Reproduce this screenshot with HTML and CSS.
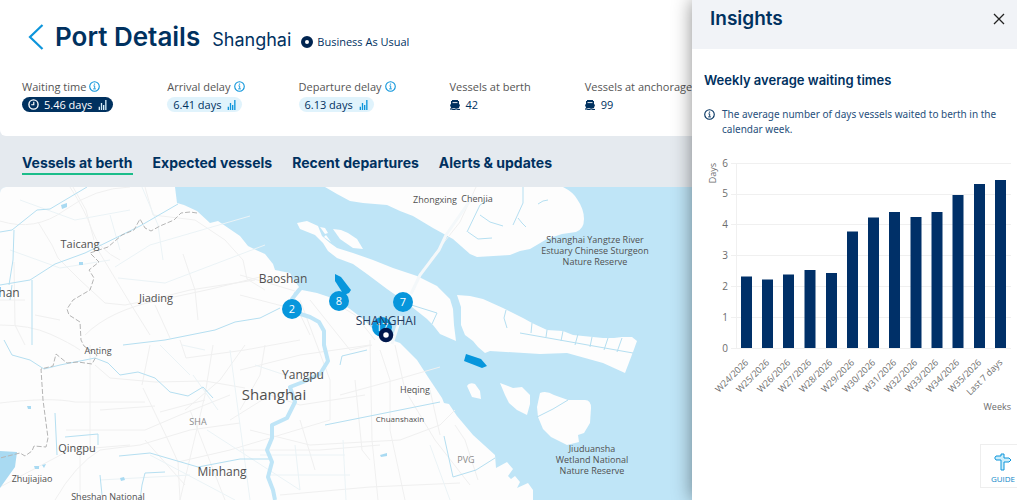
FILE: index.html
```html
<!DOCTYPE html>
<html lang="en">
<head>
<meta charset="utf-8">
<title>Port Details</title>
<link rel="stylesheet" href="styles.css">
</head>
<body>
<svg width="0" height="0" class="defs" aria-hidden="true">
  <symbol id="info" viewBox="0 0 12 12"><circle cx="6" cy="6" r="5.200" fill="none" stroke="currentColor" stroke-width="1.200"/><path d="M4.800 5.300h1.400v3M4.500 8.600h3" fill="none" stroke="currentColor"/><circle cx="6" cy="3.400" r=".8" fill="currentColor"/></symbol>
  <symbol id="bars" viewBox="0 0 10 12"><path d="M1.200 12V8M3.800 12V3.500M6.400 12V6M9 12V0" stroke="currentColor" stroke-width="1.600"/></symbol>
  <symbol id="ship" viewBox="0 0 10 10"><path d="M2 0h6v1h1v3l1 1-1.200 3.200H1.200L0 5l1-1V1h1z" fill="currentColor"/><path d="M2.500 2.600h5" stroke="#fff" stroke-width=".9"/><path d="M0 9.300q1.200-.9 2.500 0 1.200.7 2.500 0 1.200-.7 2.500 0 1.200.7 2.500 0" fill="none" stroke="currentColor" stroke-width="1.200"/></symbol>
</svg>
<div class="app">
  <main class="main">
    <header class="hero">
      <div class="title-row">
        <button class="back" aria-label="Back"><svg viewBox="0 0 16 26"><path d="M14.500 1 2 13l12.500 12" fill="none" stroke="#0d95db" stroke-width="2.200"/></svg></button>
        <h1>Port Details</h1>
        <span class="port">Shanghai</span>
        <span class="status"><i class="ring"></i>Business As Usual</span>
      </div>
      <div class="metrics">
        <div class="metric"><span class="label">Waiting time <svg class="info"><use href="#info"/></svg></span>
          <button class="pill active"><svg class="clock" viewBox="0 0 12 12"><circle cx="6" cy="6" r="5" fill="none" stroke="currentColor" stroke-width="1.500"/><path d="M6.300 3v3.300H3.500" fill="none" stroke="currentColor" stroke-width="1.300"/></svg>5.46 days<svg class="bars"><use href="#bars"/></svg></button></div>
        <div class="metric"><span class="label">Arrival delay <svg class="info"><use href="#info"/></svg></span>
          <button class="pill">6.41 days<svg class="bars"><use href="#bars"/></svg></button></div>
        <div class="metric"><span class="label">Departure delay <svg class="info"><use href="#info"/></svg></span>
          <button class="pill">6.13 days<svg class="bars"><use href="#bars"/></svg></button></div>
        <div class="metric"><span class="label">Vessels at berth</span><span class="count"><svg class="ship"><use href="#ship"/></svg>42</span></div>
        <div class="metric"><span class="label">Vessels at anchorage</span><span class="count"><svg class="ship"><use href="#ship"/></svg>99</span></div>
      </div>
    </header>
    <nav class="tabs">
      <a class="tab current" href="#berth">Vessels at berth</a>
      <a class="tab" href="#expected">Expected vessels</a>
      <a class="tab" href="#departures">Recent departures</a>
      <a class="tab" href="#alerts">Alerts &amp; updates</a>
    </nav>
    <section class="map" aria-label="Map of Shanghai">
      <svg class="map-canvas" viewBox="0 187 692 313" preserveAspectRatio="xMinYMin slice">
        <g class="land">
          <path d="M0 187H175L177 203 184 205 197 211 210 223 218 221 240 236 248 246 256 250 265 254 273 264 275 270 290 273 294 280 299 287 293 294 302 290 317 293 335 299 350 309 363 319 380 336 400 343 417 360 428 377 442 398 444 403 449 404 457 416 473 435 495 455 496 468 507 462 513 469 508 476 511 479 515 476 520 482 517 488 528 483 533 490 533 500H0z"/>
          <path d="M325 187 337 194 350 201 363 203 387 205 400 211 413 216 433 228 453 239 470 254 477 257 510 255 520 251 530 249 547 239 562 234 576 232Q584 229 584 219T577 199Q573 192 563 187z"/>
          <path d="M297 223 307 221 318 226 322 236 330 243 337 248 353 253 373 260 393 268 417 276 437 286 450 299 453 309 454 325 456 341 440 334 433 325 427 319 407 303 387 289 367 274 353 264 337 258 328 251 323 243 315 235 300 229z"/>
          <path d="M320 227 325 228 328 233 325 234zM326 235 331 242 324 237z"/>
          <path d="M333 229 341 230 348 233 357 239 363 249 353 248 340 239z"/>
          <path d="M457 295 470 296 483 299 503 308 523 318 532 323 547 330 563 331 573 335 603 338 614 338 622 337 632 337 637 341 633 352 625 373 603 363 567 353 540 354 490 351 485 353 478 347 473 341 465 335 461 325 461 307z"/>
          <path d="M467 386Q469 382 475 384L480 391 481 399 472 397zM500 383 513 388 522 387 530 395 530 404 527 415 517 410 509 403 505 395z"/>
          <path d="M540 393Q546 390 554 395L568 400 585 400Q591 400 591 408L590 423 584 433 578 435 579 442 567 445 551 437 543 429 538 417 537 407z"/>
        </g>
        <g class="roads">
          <path d="M70 187Q85 210 92 230T120 260M0 221Q35 232 65 210T130 187M38 222 52 245 58 258 80 280 105 303 125 305 150 300 190 290 255 280M98 250 130 303 150 335M73 187 86 210 94 240M145 187 153 215M153 215 195 220 225 240 243 260 247 279 265 290M183 254 195 290 198 320M155 305 170 338M0 325Q30 325 50 334T80 350M14 262 15 325 25 345M85 335Q110 310 160 300T260 277"/>
          <path d="M0 403Q50 397 75 402L145 402M90 345 90 450M95 365 110 378 155 382 205 381 245 388M143 388 168 440 178 462 180 500M66 430H145L180 415 230 395M55 500Q75 465 100 450L140 445 190 430 240 423M80 500 80 450M150 345 142 385M213 345 205 395 180 500M180 340 186 358 245 350 300 340M160 412 205 400M190 410 225 500M145 440 185 485M245 345 220 380 185 410M0 487 70 450 130 445M178 462 230 450 330 420"/>
          <path d="M265 345 260 375 240 410M300 300 315 340 330 380 330 420M310 300 350 350 372 345M370 340 372 440 378 500M380 350 390 380 390 430 405 500M340 395 395 380 440 367M250 430 310 445 400 440 440 425 455 410M240 450 320 450 380 445M280 495 370 487 460 483M300 420 315 470M240 370 300 355 370 345M395 345 405 390 435 440 470 485M355 380 362 450 370 460M330 300 355 315 375 340M430 390 440 435M455 425 465 440 478 480"/>
          <path d="M240 275 275 285 298 292M240 295 298 310 310 335M0 300H25M35 315 60 320M100 410 155 406M230 420 270 395 300 405 365 395M430 260 460 222 476 187"/>
        </g>
        <path class="minor" d="M115 267 150 245 250 216M118 278 165 283 265 245M142 187 158 225 163 260M182 345 205 350M230 350 250 500M160 345 190 375M193 375 218 410M207 430 300 490M150 455 235 500M100 480 190 475M255 365 300 380M260 455 345 455M270 475 350 475M343 440 346 500M430 445 450 500M295 445 300 490M10 250 60 268 110 260M20 200 75 220 130 210M110 215 120 250"/>
        <path class="bridge" d="M474 195 446 235 439 250 420 275 411 294M401 316 392 344"/>
        <g class="creek">
          <path d="M0 232 12 230 37 210 50 209 87 187M14 230 13 260 9 285M0 285 30 280 55 264 85 253 140 226 178 204M12 285 10 300M32 280 32 345M123 345 165 340 215 330 235 322 260 318 280 308"/>
          <path d="M4 340 12 355 30 360 44 369 60 365 95 358 108 363 120 375 138 372 155 378 170 392 188 396 203 387 213 398M119 456 150 453 198 467 240 459 272 459M65 437 98 434 98 445M55 413 57 455M140 500 142 485 145 473 165 472M340 365 342 356 367 350"/>
          <path d="M325 425 440 402M444 436 453 477 476 470 495 458M467 232 480 205 488 200M523 187 523 203 513 225M480 215 490 222 503 226M468 232 478 239 492 238M538 204 543 201 548 200M518 218 522 223 526 227M633 353 520 333M532 323 531 333M547 330 546 337M563 331 561 341M578 334 575 345M592 337 590 347M608 338 604 350M622 338 617 352M506 310 504 318 507 328M537 417 553 409 568 400M405 303 437 313 432 324M100 475 102 495"/>
        </g>
        <path class="river" d="M300 289 292 299 294 312 310 317 319 322 324 331 324 345 328 361 320 374 303 382 290 387 295 402 287 418 272 425 272 438 267 450 272 462 268 477 273 490 275 500"/>
        <path class="lake" d="M0 451 17 452 15 467 0 488zM61 205 67 203 67 207 62 209zM79 262h4v3h-4zM120 478l4-1 1 3-4 1zM27 406h4v3h-3zM34 466h5v3h-4zM42 465l4-1-2 4zM380 455l7-2v3l-6 1z"/>
        <path class="boundary" d="M197 213 190 212 181 213 174 220 160 226 151 231 145 228 140 219 134 230 122 235 108 247 90 253 99 262 89 270 94 278 90 290 73 300 67 309 69 315 80 322 81 340 84 346 97 355 92 364 78 362 67 363 56 354 53 366 41 369 43 400 48 438 46 447 34 446 32 451 25 456 20 453 0 458"/>
        <g class="places">
          <g class="town"><text x="80" y="248">Taicang</text><text x="156" y="302">Jiading</text><text x="77" y="452">Qingpu</text></g>
          <text x="9" y="297">han</text>
          <text x="283" y="283">Baoshan</text><text x="303" y="379">Yangpu</text><text x="274" y="400" class="city">Shanghai</text>
          <text x="222" y="476">Minhang</text>
          <g class="small"><text x="98" y="354">Anting</text><text x="32" y="482">Zhujiajiao</text><text x="108" y="500">Sheshan National</text><text x="435" y="203">Zhongxing</text><text x="477" y="202">Chenjia</text><text x="415" y="393">Heqing</text>
          <text x="595" y="243">Shanghai Yangtze River</text><text x="595" y="254">Estuary Chinese Sturgeon</text><text x="595" y="265">Nature Reserve</text><text x="592" y="452">Jiuduansha</text><text x="592" y="463">Wetland National</text><text x="592" y="474">Nature Reserve</text></g>
          <text x="400" y="422" class="tiny">Chuanshaxin</text><text x="198" y="425" class="code">SHA</text><text x="466" y="463" class="code">PVG</text>
        </g>
        <g class="vessels"><path d="M335 274 341 277 351 290 349 293 344 295 335 281z"/><path d="M466 354 481 359 487 366 482 368 464 361z"/><circle cx="292" cy="309" r="10"/><circle cx="339" cy="301" r="10"/><circle cx="403" cy="302" r="10"/><circle cx="382" cy="327" r="10"/></g>
        <g class="counts"><text x="292" y="313">2</text><text x="339" y="305">8</text><text x="403" y="306">7</text><text x="382" y="331">17</text></g>
        <text x="386" y="325" class="port-name">SHANGHAI</text>
        <circle cx="386" cy="335" r="5" fill="#fff" stroke="#00184d" stroke-width="4.500"/>
      </svg>
    </section>
  </main>
  <aside class="panel">
    <header class="panel-head"><h2>Insights</h2><button class="close" aria-label="Close"><svg viewBox="0 0 12 12"><path d="M1 1l10 10M11 1 1 11" stroke="#222" stroke-width="1.300"/></svg></button></header>
    <div class="panel-body">
      <h3>Weekly average waiting times</h3>
      <p class="note"><svg class="info"><use href="#info"/></svg><span>The average number of days vessels waited to berth in the calendar week.</span></p>
    </div>
    <svg class="chart" viewBox="692 150 325 270" role="img" aria-label="Weekly average waiting times">
      <path class="grid" d="M731 163.500h280M731 194.500h280M731 224.500h280M731 255.500h280M731 286.500h280M731 317.500h280M731 348.500h280M736.500 163v185"/>
      <path class="bar" d="M741 348v-71.500h11v71.500zM762 348v-68.500h11v68.500zM783 348v-73.500h11v73.500zM804.500 348v-78h11v78zM826 348v-75h11v75zM847 348v-116.500h11v116.500zM868 348v-130.500h11v130.500zM889 348v-136h11v136zM910.500 348v-131h11v131zM931.500 348v-136h11v136zM952.500 348v-153h11v153zM974 348v-164h11v164zM995 348v-168h11v168z"/>
      <g class="axis ticks"><text x="728" y="167">6</text><text x="728" y="197">5</text><text x="728" y="228">4</text><text x="728" y="259">3</text><text x="728" y="290">2</text><text x="728" y="321">1</text><text x="728" y="352">0</text></g>
      <g class="axis">
        <text transform="translate(749 363) rotate(-45)">W24/2026</text><text transform="translate(770 363) rotate(-45)">W25/2026</text><text transform="translate(791 363) rotate(-45)">W26/2026</text><text transform="translate(812 363) rotate(-45)">W27/2026</text><text transform="translate(833 363) rotate(-45)">W28/2026</text><text transform="translate(855 363) rotate(-45)">W29/2026</text><text transform="translate(876 363) rotate(-45)">W30/2026</text><text transform="translate(897 363) rotate(-45)">W31/2026</text><text transform="translate(918 363) rotate(-45)">W32/2026</text><text transform="translate(939 363) rotate(-45)">W33/2026</text><text transform="translate(960 363) rotate(-45)">W34/2026</text><text transform="translate(982 363) rotate(-45)">W35/2026</text><text transform="translate(1003 363) rotate(-45)">Last 7 days</text>
        <text transform="translate(716 163) rotate(-90)">Days</text><text x="1011" y="410">Weeks</text>
      </g>
    </svg>
    <button class="guide"><svg viewBox="0 0 18 18"><path d="M2 3h5V1h3v4h5l2 2-2 2h-5v8H7V7H2L.7 5z" fill="#cceefb" stroke="#0d95db"/></svg>GUIDE</button>
  </aside>
</div>
</body>
</html>
```
FILE: styles.css
```css
* { box-sizing: border-box; }
body { margin: 0; font-family: "Open Sans", "Noto Sans", sans-serif; color: #00315f; }
button { border: 0; background: none; padding: 0; margin: 0; font: inherit; color: inherit; cursor: pointer; }
h1, h2, h3, p { margin: 0; }
svg { display: block; }
.defs { position: absolute; }
.app { display: flex; height: 100vh; overflow: hidden; }
.main { flex: 1; min-width: 0; display: flex; flex-direction: column; overflow: hidden; background: #e5eaef; }
.hero { background: #fff; height: 136px; padding: 20px 0 0 22px; border-radius: 0 0 0 6px; }
.title-row { display: flex; align-items: center; height: 34px; white-space: nowrap; font-family: Inter, sans-serif; }
.back { width: 16px; height: 26px; margin: 0 11px 0 6px; }
h1 { font-size: 26px; line-height: 34px; font-weight: 600; color: #00315f; }
.port { font-size: 18px; line-height: 24px; margin: 6px 10px 0 12px; }
.status { display: flex; align-items: center; gap: 4px; font: 11px/16px "Open Sans", sans-serif; padding-top: 9px; }
.ring { width: 12px; height: 12px; border: 4px solid #002450; border-radius: 50%; }
.metrics { display: flex; gap: 54px; padding-top: 24px; white-space: nowrap; }
.metric { display: flex; flex-direction: column; align-items: flex-start; gap: 3px; font-size: 11px; line-height: 15px; }
.label { display: flex; align-items: center; gap: 3px; height: 16px; color: #555; }
.info { width: 11px; height: 11px; color: #0d95db; flex: none; }
.pill { display: flex; align-items: center; height: 15px; padding: 0 6px; border-radius: 8px; background: #e0f3fc; color: #00315f; line-height: 15px; }
.pill.active { background: #00315f; color: #fff; }
.clock { width: 11px; height: 11px; margin-right: 5px; }
.bars { width: 9px; height: 10px; margin-left: 6px; color: #0d95db; }
.active .bars { color: #d5eefb; }
.count { display: flex; align-items: center; gap: 6px; }
.ship { width: 10px; height: 10px; }
.tabs { display: flex; gap: 20px; height: 51px; padding: 17px 22px 0; white-space: nowrap; font: 700 14px/20px Inter, sans-serif; }
.tab { color: #00315f; text-decoration: none; height: 22px; }
.tab.current { border-bottom: 2px solid #1bbd8a; }
.map { flex: 1; min-height: 0; background: #bfe5f7; border-radius: 6px 0 0; overflow: hidden; }
.map-canvas { width: 100%; height: 100%; }
.land { fill: #fdfdfd; }
.roads { fill: none; stroke: #f0f0f0; stroke-width: 1; }
.minor { fill: none; stroke: #ebf3f6; stroke-width: 1; }
.bridge { fill: none; stroke: #f4f8fa; stroke-width: 3; }
.creek { fill: none; stroke: #b5dff1; stroke-width: 1; }
.river { fill: none; stroke: #bfe5f7; stroke-width: 4; stroke-linejoin: round; }
.lake { fill: #a9daf2; }
.boundary { fill: none; stroke: #b5b5b5; stroke-width: 1; stroke-dasharray: 5 2; }
.places { font-size: 12px; fill: #505050; text-anchor: middle; }
.places .town { font-size: 11px; }
.places .city { font-size: 15px; }
.places .small { font-size: 9px; }
.places .tiny { font-size: 8px; }
.places .code { font-size: 9px; fill: #8b8b8b; }
.vessels { fill: #0796dc; }
.counts { font-size: 11px; fill: #fff; text-anchor: middle; }
.port-name { font-size: 12px; fill: #263c5e; text-anchor: middle; }
.panel { position: relative; width: 325px; flex: none; background: #fff; box-shadow: 0 0 18px rgba(0, 0, 0, .45); }
.panel-head { display: flex; align-items: flex-start; justify-content: space-between; height: 49px; padding: 7px 12px 0 18px; background: #f1f3f7; }
h2 { font: 600 19px/24px Inter, sans-serif; }
.close { width: 12px; height: 12px; margin-top: 6px; }
.panel-body { padding: 21px 12px 0; height: 101px; }
h3 { font: 600 13px/20px Inter, sans-serif; }
.note { display: flex; gap: 7px; padding-top: 17px; font: 10px/15px "Noto Sans", sans-serif; color: #27507c; }
.note .info { color: #00315f; margin-top: 2px; }
.chart { width: 100%; }
.grid { fill: none; stroke: #f0f0f0; }
.bar { fill: #003068; }
.axis { font-size: 9px; fill: #6c6c6c; text-anchor: end; }
.ticks { font-size: 10px; }
.guide { position: absolute; right: 0; bottom: 12px; width: 37px; height: 44px; display: flex; flex-direction: column; align-items: center; gap: 2px; padding: 8px 0 0 8px; background: #fff; border: 1px solid #eee; border-right: 0; color: #0d87c9; font-size: 8px; line-height: 12px; }
.guide svg { width: 18px; height: 18px; }
```
